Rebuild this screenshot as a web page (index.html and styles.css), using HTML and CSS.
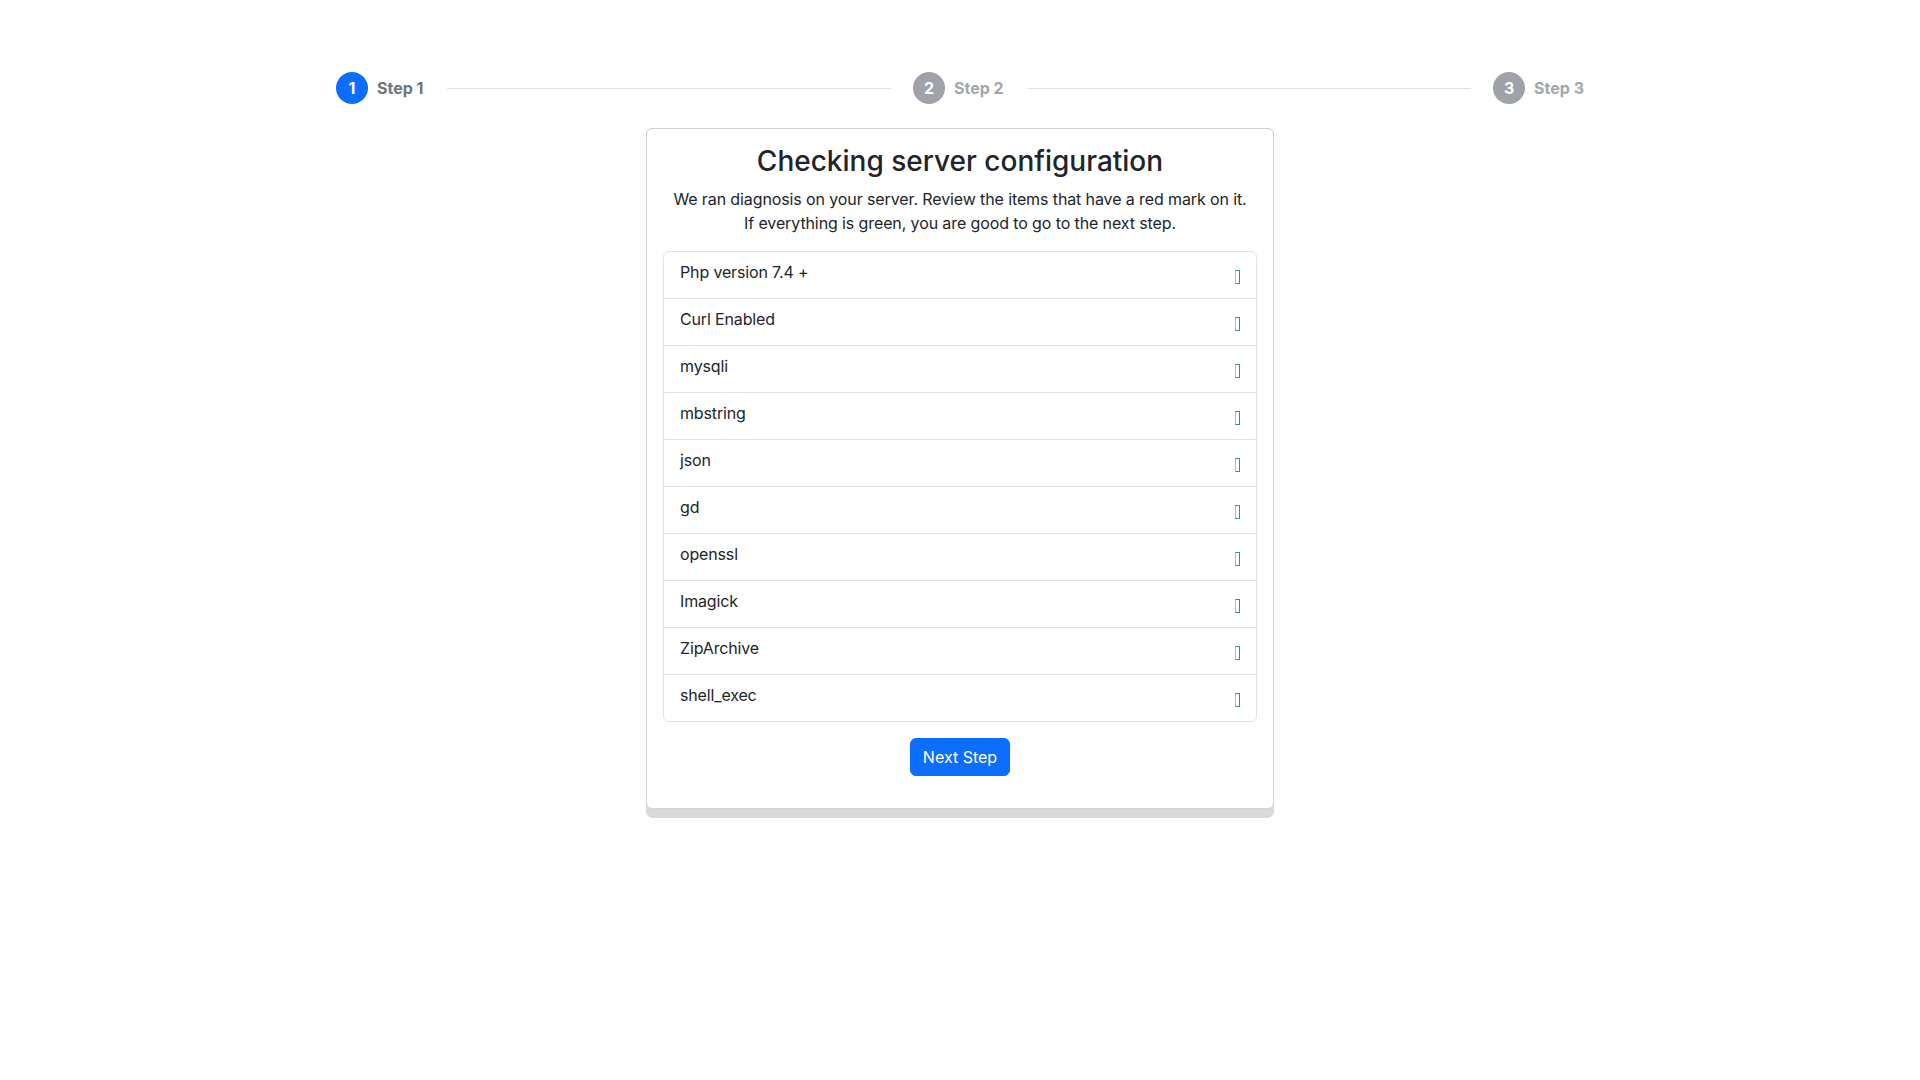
FILE: index.html
```html
<!DOCTYPE html>
<html lang="en">
<head>
<meta charset="utf-8">
<title>Installer - Step 1</title>
<link rel="stylesheet" href="styles.css">
</head>
<body>
<div class="stepper">
  <div class="step active"><span class="step-num">1</span><span class="step-label">Step 1</span></div>
  <div class="step-line"></div>
  <div class="step"><span class="step-num">2</span><span class="step-label">Step 2</span></div>
  <div class="step-line"></div>
  <div class="step"><span class="step-num">3</span><span class="step-label">Step 3</span></div>
</div>

<div class="card-shell">
  <div class="card">
    <h3 class="card-title">Checking server configuration</h3>
    <p class="card-text">We ran diagnosis on your server. Review the items that have a red mark on it.<br>If everything is green, you are good to go to the next step.</p>
    <ul class="list">
      <li class="list-item"><span class="item-name">Php version 7.4 +</span><span class="item-icon"><span class="tofu"></span></span></li>
      <li class="list-item"><span class="item-name">Curl Enabled</span><span class="item-icon"><span class="tofu"></span></span></li>
      <li class="list-item"><span class="item-name">mysqli</span><span class="item-icon"><span class="tofu"></span></span></li>
      <li class="list-item"><span class="item-name">mbstring</span><span class="item-icon"><span class="tofu"></span></span></li>
      <li class="list-item"><span class="item-name">json</span><span class="item-icon"><span class="tofu"></span></span></li>
      <li class="list-item"><span class="item-name">gd</span><span class="item-icon"><span class="tofu"></span></span></li>
      <li class="list-item"><span class="item-name">openssl</span><span class="item-icon"><span class="tofu"></span></span></li>
      <li class="list-item"><span class="item-name">Imagick</span><span class="item-icon"><span class="tofu"></span></span></li>
      <li class="list-item"><span class="item-name">ZipArchive</span><span class="item-icon"><span class="tofu"></span></span></li>
      <li class="list-item"><span class="item-name">shell_exec</span><span class="item-icon"><span class="tofu"></span></span></li>
    </ul>
    <div class="actions"><button class="btn-primary" type="button">Next Step</button></div>
  </div>
</div>
</body>
</html>
```

FILE: styles.css
```css
* { box-sizing: border-box; }
html, body { margin: 0; padding: 0; background: #fff; }
body {
  font-family: Inter, "Noto Sans", "Liberation Sans", sans-serif;
  font-size: 16px;
  line-height: 1.5;
  color: #212529;
}

.stepper {
  width: 1248px;
  margin: 72px auto 0;
  display: flex;
  align-items: center;
  height: 32px;
}
.step {
  display: flex;
  align-items: center;
  gap: 9px;
  flex: none;
}
.step-num {
  width: 32px;
  height: 32px;
  border-radius: 50%;
  background: #9fa3a9;
  color: #fff;
  font-weight: 700;
  font-size: 16px;
  line-height: 32px;
  text-align: center;
}
.step-label {
  font-weight: 700;
  font-size: 16px;
  color: #a3a7ad;
}
.step.active .step-num { background: #0d6efd; }
.step.active .step-label { color: #6c757d; }
.step-line {
  flex: 1;
  height: 1px;
  background: #dee2e6;
  margin: 0 22px 0 24px;
}

.card-shell {
  width: 628px;
  margin: 24px auto 0;
  background: #d9d9d9;
  border-radius: 7px;
  padding-bottom: 9px;
}
.card {
  border: 1px solid #d2d2d2;
  border-radius: 6px;
  padding: 16px 16px 32px;
  background: #fff;
  text-align: center;
}
.card-title {
  margin: 0 0 8px;
  font-size: 28px;
  font-weight: 500;
  line-height: 1.2;
}
.card-text {
  margin: 0 0 16px;
  letter-spacing: -0.11px;
}
.list {
  list-style: none;
  margin: 0;
  padding: 0;
  border: 1px solid #dee2e6;
  border-radius: 6px;
  text-align: left;
}
.list-item {
  display: flex;
  justify-content: space-between;
  align-items: flex-start;
  padding: 8px 16px;
  border-top: 1px solid #dee2e6;
}
.list-item:first-child { border-top: 0; }
.item-name { line-height: 24px; letter-spacing: -0.15px; }
.item-icon {
  height: 30px;
  display: flex;
  align-items: center;
}
.tofu {
  display: block;
  width: 5px;
  height: 14px;
  margin-top: 4px;
  border: 1px solid #2f9a68;
  border-left-color: #8fcfae;
}
.actions {
  margin-top: 16px;
}
.btn-primary {
  font-family: inherit;
  font-size: 16px;
  line-height: 24px;
  padding: 6px 12px;
  border: 1px solid #0d6efd;
  border-radius: 6px;
  background: #0d6efd;
  color: #fff;
  cursor: pointer;
}
```
